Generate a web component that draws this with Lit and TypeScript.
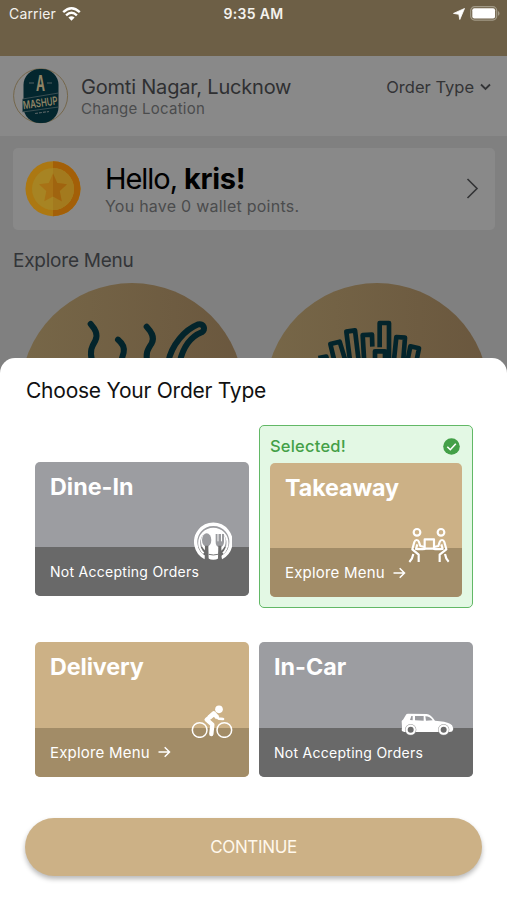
import { LitElement, html, css, svg, nothing } from "lit";
import { customElement, property } from "lit/decorators.js";
import { classMap } from "lit/directives/class-map.js";

type Kind = "dine" | "takeaway" | "delivery" | "car";

const icons = {
  dine: html`<svg width="38.67" height="38.67" viewBox="520 305 116 116">
    <path d="M554 412A53 53 0 1 1 602 412" fill="none" stroke="#fff" stroke-width="10"/>
    <path d="M549 399A42.500 42.500 0 1 1 607 399" fill="none" stroke="#fff" stroke-width="6"/>
    <circle cx="578" cy="363" r="37" fill="#fff"/>
    <path d="M562 376h32v38q-16 9-32 0z" fill="#fff"/>
    <path d="M564 402q14 4 28 0" fill="none" stroke="#777" stroke-width="3"/>
    <ellipse cx="558" cy="359" rx="14" ry="20" fill="#9a9b9f"/>
    <path d="M553 376h10l1 42h-12z" fill="#6b6b6b"/>
    <path d="M585 341v24q0 15 12 15t13-15v-24z" fill="#9a9b9f"/>
    <path d="M593 376h9l1 42h-11z" fill="#6b6b6b"/>
    <path d="M592 341v22M602.500 341v22" stroke="#fff" stroke-width="3"/>
  </svg>`,
  takeaway: html`<svg width="42" height="36" viewBox="472 336 126 108">
    <g fill="none" stroke="#fff" stroke-width="6.500" stroke-linejoin="round">
      <circle cx="499" cy="352" r="10"/><circle cx="571" cy="352" r="10"/>
      <path d="M522 373h28v28h-28z"/>
      <path d="M522 396l-13-3-4-12q-2-6-7-6-5 0-7 6l-6 22 19 16v22M488 417q-2 14-12 24M500 388l-4 14q10 1 28 0"/>
      <path d="M550 396l13-3 4-12q2-6 7-6 5 0 7 6l6 22-20 16v22M583 417q2 14 11 23M572 388l4 14q-14 1-28 0"/>
    </g>
  </svg>`,
  delivery: html`<svg width="42" height="33.33" viewBox="514 225 126 100">
    <g fill="none" stroke="#fff" stroke-width="4.500">
      <circle cx="540" cy="300" r="22"/><circle cx="614" cy="300" r="22"/>
    </g>
    <circle cx="598" cy="238" r="11.500" fill="#fff"/>
    <path d="M582 253L561 269L578 284L575 312" fill="none" stroke="#fff" stroke-width="13" stroke-linejoin="round" stroke-linecap="round"/>
    <path d="M568 263L582 250L594 263" fill="none" stroke="#fff" stroke-width="13" stroke-linejoin="round"/>
    <path d="M588 257L597 266L610 267" fill="none" stroke="#fff" stroke-width="8" stroke-linecap="round" stroke-linejoin="round"/>
  </svg>`,
  car: html`<svg width="53.33" height="22.67" viewBox="452 250 160 68">
    <path d="M455 293l-1-18q0-3 4-5l9-15q1-3 6-3l56 1q12 1 25 20 32 2 45 9 8 3 9 12l1 4-3 7q-2 2-10 2H462q-8-1-8-5z" fill="#fff"/>
    <path d="M479 271l4-12h4v13zM494 259h26v14l-26-1zM525 260q14 0 22 12l-20 1z" fill="#9a9b9f"/>
    <circle cx="481" cy="300" r="17" fill="#999"/><circle cx="580" cy="300" r="17" fill="#999"/>
    <circle cx="481" cy="300" r="15.500" fill="#fff"/><circle cx="580" cy="300" r="15.500" fill="#fff"/>
    <circle cx="481" cy="300" r="9" fill="#6b6b6b"/><circle cx="580" cy="300" r="9" fill="#6b6b6b"/>
  </svg>`,
};

@customElement("order-card")
class OrderCard extends LitElement {
  @property() name = "";
  @property() kind: Kind = "dine";
  @property({ type: Boolean }) open = false;
  @property({ type: Boolean }) selected = false;

  static styles = css`
    :host { display: block; font-family: Inter, "Liberation Sans", sans-serif; }
    .frame { box-sizing: border-box; }
    .frame.selected { height: 183px; border: 1.500px solid #62b866; border-radius: 5px; background: #e3f8e4; padding: 0 10px; }
    .flag { display: flex; align-items: center; justify-content: space-between; height: 36.500px; padding: 4px 2px 0 0; box-sizing: border-box; color: #43a047; font-size: 16.500px; font-weight: 500; letter-spacing: 0.200px; }
    .check { display: block; }
    .card { position: relative; display: flex; flex-direction: column; height: 134.500px; border-radius: 5px; overflow: hidden; background: #9c9da1; color: #fff; }
    .card.open { background: #ccb186; }
    .name { flex: 1; padding: 11px 15px 0; font-size: 23.300px; line-height: 28px; font-weight: 700; }
    .open .name { letter-spacing: -0.120px; }
    .foot { display: flex; align-items: center; gap: 8px; height: 49px; padding: 0 15px; background: #696969; font-size: 14px; letter-spacing: 0.270px; box-sizing: border-box; }
    .open .foot { background: #a28c67; font-size: 15px; letter-spacing: 0.200px; }
    .icon { position: absolute; line-height: 0; }
    .icon.dine { right: 16.700px; top: 60px; }
    .icon.takeaway { right: 12.500px; top: 64px; }
    .icon.delivery { right: 15.700px; top: 62.500px; }
    .icon.car { right: 19px; top: 71px; }
  `;

  render() {
    return html`<div class=${classMap({ frame: true, selected: this.selected })}>
      ${this.selected
        ? html`<div class="flag"><span>Selected!</span>
            <svg class="check" width="17" height="17" viewBox="0 0 17 17"><circle cx="8.500" cy="8.500" r="8.300" fill="#43a047"/><path d="M4.300 8.700l3 3 5.500-6" fill="none" stroke="#fff" stroke-width="1.600"/></svg>
          </div>`
        : nothing}
      <div class=${classMap({ card: true, open: this.open })}>
        <div class="name">${this.name}</div>
        <div class="foot">
          <span>${this.open ? "Explore Menu" : "Not Accepting Orders"}</span>
          ${this.open
            ? html`<svg width="13" height="12" viewBox="0 0 13 12"><path d="M0.500 6h11M6.700 1.200L11.500 6 6.700 10.800" fill="none" stroke="#fff" stroke-width="1.500"/></svg>`
            : nothing}
        </div>
        <div class="icon ${this.kind}">${icons[this.kind]}</div>
      </div>
    </div>`;
  }
}

const soup = svg`
  <g fill="none" stroke="#03242b" stroke-width="18" stroke-linecap="round" stroke-linejoin="round">
    <path d="M272 162c12 14 24 30 14 50-10 17-18 30-10 60"/>
    <path d="M354 209c12 10 20 24 17 38-2 10-6 14-8 34"/>
    <path d="M440 170c12 13 26 30 15 50-12 18-20 30-12 60"/>
    <path d="M505 275c10-50 48-95 90-112 16-4 24 16 10 24-30 12-54 36-66 90"/>
  </g>`;

const fries = svg`
  <g fill="none" stroke="#03242b" stroke-width="14" stroke-linejoin="round">
    <path d="M196 264l24-4 6 30M246 280l-14-58 28-7 20 66M292 280l-12-95 26-4 12 100M334 280l-5-85 28-1 1 36"/>
    <path d="M380 232v-73h28v110M366 280v-36h30v36M422 280l8-79 26 2-6 78M462 280l10-51 26 6-8 40"/>
  </g>`;

@customElement("app-root")
class AppRoot extends LitElement {
  static styles = css`
    :host { display: block; position: relative; width: 507px; height: 900px; overflow: hidden; background: #808080; font-family: Inter, "Liberation Sans", sans-serif; color: #000; }
    svg { display: block; flex: none; }
    .top { height: 56px; box-sizing: border-box; background: #6d5f46; color: #f4f2ee; }
    .status { display: grid; grid-template-columns: 1fr auto 1fr; align-items: center; height: 27px; padding: 0 7px 0 9px; font-size: 14px; }
    .carrier { display: flex; align-items: center; gap: 6px; letter-spacing: 0.150px; }
    .time { font-weight: 600; letter-spacing: 0.300px; margin-right: 2px; }
    .power { display: flex; align-items: center; justify-content: flex-end; gap: 5px; }
    .place { display: flex; align-items: center; height: 80px; box-sizing: border-box; padding: 0 16px 0 13px; background: #898989; color: #2f3032; }
    .where { flex: 1; margin-left: 12px; }
    .city { font-size: 20px; line-height: 24px; letter-spacing: -0.200px; }
    .change { font-size: 15px; line-height: 19px; letter-spacing: 0.250px; color: #4b4c4d; }
    .type { display: flex; align-items: center; gap: 6px; padding-bottom: 18px; font-size: 16.500px; letter-spacing: 0; color: #333436; }
    .hello { display: flex; align-items: center; height: 82px; margin: 12px 12px 0 13px; padding: 0 16px 0 12px; border-radius: 5px; background: #898989; }
    .greet { flex: 1; margin-left: 24px; }
    .hi { font-size: 29px; line-height: 34px; letter-spacing: -1.050px; }
    .hi b { letter-spacing: -0.300px; }
    .points { font-size: 16px; line-height: 21px; letter-spacing: 0.240px; color: #4b4c4d; }
    .section { margin: 19px 0 0 13px; font-size: 19px; line-height: 24px; letter-spacing: -0.230px; color: #333538; }
    .menu { display: flex; gap: 21px; padding: 10px 0 0 20px; }
    .sheet { position: absolute; left: 0; right: 0; bottom: 0; height: 542px; box-sizing: border-box; border-radius: 15px 15px 0 0; background: #fff; }
    .title { padding: 19px 26px 0; font-size: 21px; line-height: 27px; letter-spacing: -0.240px; color: #111; }
    .grid { display: grid; grid-template-columns: 214px 214px; gap: 34px 10px; align-items: end; padding: 21px 0 0 35px; }
    .first { margin-bottom: 12px; }
    .go { display: flex; align-items: center; justify-content: center; height: 58px; margin: 41px 25px 0 25px; border-radius: 29px; background: #ccb186; color: #fff8ec; font-size: 17px; letter-spacing: -0.350px; box-shadow: 0 3px 5px rgba(0, 0, 0, 0.280); }
  `;

  render() {
    return html`
      <div class="top">
        <div class="status">
          <div class="carrier"><span>Carrier</span>
            <svg width="19" height="14" viewBox="0 0 19 14"><path d="M1.200 5.200Q9.500-2.600 17.800 5.200M4.100 8.300Q9.500 3.200 14.900 8.300" fill="none" stroke="#fff" stroke-width="2.400"/><path d="M6.400 10.500Q9.500 7.900 12.600 10.500L9.500 13.700z" fill="#fff"/></svg>
          </div>
          <div class="time">9:35 AM</div>
          <div class="power">
            <svg width="12" height="12" viewBox="0 0 12 12"><path d="M11.500 0.500L6.800 11.500 5.800 6.300 0.500 5.400z" fill="#fff" stroke="#fff" stroke-width="0.800" stroke-linejoin="round"/></svg>
            <svg width="30" height="15" viewBox="0 0 30 15"><rect x="0.700" y="0.700" width="26" height="13.400" rx="4" fill="none" stroke="#a29a87" stroke-width="1.200"/><rect x="2.300" y="2.300" width="22.800" height="10.200" rx="2" fill="#fff"/><path d="M28 5v4.800q1.500-.8 1.500-2.400T28 5z" fill="#a29a87"/></svg>
          </div>
        </div>
      </div>
      <div class="place">
        <svg width="56" height="56" viewBox="0 0 56 56">
          <circle cx="27.600" cy="27.800" r="27" fill="none" stroke="#75674b"/>
          <rect x="10.500" y="1" width="35" height="54" rx="16" fill="#03262e"/>
          <path d="M9.500 31l36-6v14l-36 5z" fill="#03262e" stroke="#536062" stroke-width="0.700"/>
          <text x="27.500" y="22.500" text-anchor="middle" font-size="22" font-weight="700" textLength="9" lengthAdjust="spacingAndGlyphs" fill="#8e8466">A</text>
          <path d="M16 15h5M34 15h5" stroke="#536062"/>
          <text x="0" y="0" text-anchor="middle" font-size="8.300" font-weight="600" fill="#8e8466" transform="translate(27.800 38.800) rotate(-8) scale(0.950 1.350)">MASHUP</text>
          <path d="M22 45.500l14-2" stroke="#536062" stroke-width="1.200" stroke-dasharray="3 1"/>
        </svg>
        <div class="where"><div class="city">Gomti Nagar, Lucknow</div><div class="change">Change Location</div></div>
        <div class="type"><span>Order Type</span>
          <svg width="11" height="8" viewBox="0 0 11 8"><path d="M1 1.500l4.500 4.500L10 1.500" fill="none" stroke="#333436" stroke-width="1.800"/></svg>
        </div>
      </div>
      <div class="hello">
        <svg width="56" height="56" viewBox="0 0 56 56">
          <circle cx="28" cy="27.700" r="27.500" fill="#ac7812"/><path d="M28 .2a27.500 27.500 0 0 1 0 55z" fill="#a35f08"/>
          <circle cx="28" cy="28" r="21" fill="#a78423"/><path d="M28 7a21 21 0 0 1 0 42z" fill="#a37a1e"/>
          <path d="M28 12.500l4.200 9.500 9.800 1.200-7.300 6.900 2 10.200L28 35.500l-8.700 4.800 2-10.200-7.300-6.900L23.800 22z" fill="#a87216"/>
          <path d="M28 12.500l4.200 9.500 9.800 1.200-7.300 6.900 2 10.200L28 35.500z" fill="#a0640f"/>
        </svg>
        <div class="greet"><div class="hi">Hello, <b>kris!</b></div><div class="points">You have 0 wallet points.</div></div>
        <svg width="13" height="22" viewBox="0 0 13 22"><path d="M1.500 1L11 10.500 1.500 20" fill="none" stroke="#333436" stroke-width="1.600"/></svg>
      </div>
      <div class="section">Explore Menu</div>
      <div class="menu">
        <svg width="224" height="224" viewBox="60 39 672 672">
          <defs><linearGradient id="tan"><stop offset="0" stop-color="#776748"/><stop offset="1" stop-color="#6a573e"/></linearGradient></defs>
          <circle cx="396" cy="375" r="336" fill="url(#tan)"/>${soup}
        </svg>
        <svg width="224" height="224" viewBox="36 39 672 672"><circle cx="372" cy="375" r="336" fill="url(#tan)"/>${fries}</svg>
      </div>
      <div class="sheet">
        <div class="title">Choose Your Order Type</div>
        <div class="grid">
          <order-card class="first" name="Dine-In" kind="dine"></order-card>
          <order-card name="Takeaway" kind="takeaway" open selected></order-card>
          <order-card name="Delivery" kind="delivery" open></order-card>
          <order-card name="In-Car" kind="car"></order-card>
        </div>
        <div class="go">CONTINUE</div>
      </div>
    `;
  }
}
